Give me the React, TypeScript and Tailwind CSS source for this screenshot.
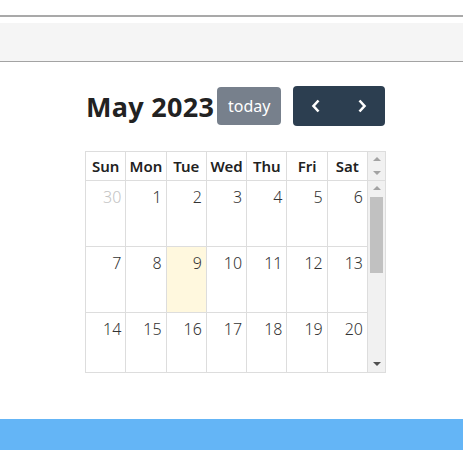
import React from "react";

const days = ["Sun", "Mon", "Tue", "Wed", "Thu", "Fri", "Sat"];
const weeks = [
  [30, 1, 2, 3, 4, 5, 6],
  [7, 8, 9, 10, 11, 12, 13],
  [14, 15, 16, 17, 18, 19, 20],
];

function Up({ c }: { c: string }) {
  return (
    <div
      className="w-0 h-0 border-l-[4px] border-r-[4px] border-b-[4px] border-l-transparent border-r-transparent"
      style={{ borderBottomColor: c }}
    />
  );
}
function Down({ c }: { c: string }) {
  return (
    <div
      className="w-0 h-0 border-l-[4px] border-r-[4px] border-t-[4px] border-l-transparent border-r-transparent"
      style={{ borderTopColor: c }}
    />
  );
}

export default function App() {
  return (
    <div className="w-[463px] h-[450px] bg-white overflow-hidden flex flex-col" style={{ fontFamily: '"Noto Sans", "Open Sans", sans-serif' }}>
      <div className="h-[15px]" />
      <div className="h-[2px] bg-[#a9a9a9]" />
      <div className="h-[6px]" />
      <div className="h-[39px] bg-[#f5f5f5] border-b border-[#a3a3a3]" />
      <div className="flex-1 flex flex-col">
        <div className="ml-[85px] w-[301px] mt-[24px]">
          <div className="flex items-center h-[40px]">
            <div className="text-[27px] font-bold text-[#222] leading-none ml-[1px] tracking-[0.3px]">May 2023</div>
            <div className="ml-[3px] h-[38px] w-[64px] rounded-[4px] bg-[#77808c] text-white text-[16px] flex items-center justify-center">today</div>
            <div className="ml-auto mr-[1px] h-[40px] w-[92px] rounded-[4px] bg-[#2c3e50] flex">
              <div className="flex-1 flex items-center justify-center">
                <svg width="12" height="16" viewBox="0 0 12 16"><path d="M8.5 2.5 L3.5 8 L8.5 13.5" stroke="white" strokeWidth="2.6" fill="none" /></svg>
              </div>
              <div className="flex-1 flex items-center justify-center">
                <svg width="12" height="16" viewBox="0 0 12 16"><path d="M3.5 2.5 L8.5 8 L3.5 13.5" stroke="white" strokeWidth="2.6" fill="none" /></svg>
              </div>
            </div>
          </div>
          <div className="mt-[25px] border border-[#dddddd]">
            <div className="flex h-[29px] border-b border-[#dddddd]">
              <div className="w-[282px] grid grid-cols-7">
                {days.map((d) => (
                  <div key={d} className="flex items-center justify-center text-[15px] font-semibold text-[#222] border-r border-[#dddddd]">{d}</div>
                ))}
              </div>
              <div className="w-[17px] bg-[#f1f1f1] flex flex-col items-center justify-between py-[5px]">
                <Up c="#a3a3a3" />
                <Down c="#a3a3a3" />
              </div>
            </div>
            <div className="flex h-[191px] overflow-hidden">
              <div className="w-[282px] flex flex-col">
                {weeks.map((w, wi) => (
                  <div key={wi} className="grid grid-cols-7 h-[66px] shrink-0 border-b border-[#dddddd]">
                    {w.map((n, i) => (
                      <div
                        key={i}
                        className={`border-r border-[#dddddd] text-right pr-[4px] pt-[4px] text-[16px] leading-[24px] font-light ${wi === 1 && i === 2 ? "bg-[#fff8de]" : ""} ${wi === 0 && i === 0 ? "text-[#c4c4c4]" : "text-[#333]"}`}
                      >
                        {n}
                      </div>
                    ))}
                  </div>
                ))}
              </div>
              <div className="w-[17px] bg-[#f1f1f1] flex flex-col items-center relative">
                <div className="mt-[5px]"><Up c="#a3a3a3" /></div>
                <div className="mt-[7px] w-[13px] h-[76px] bg-[#c1c1c1]" />
                <div className="absolute bottom-[6px]"><Down c="#505050" /></div>
              </div>
            </div>
          </div>
        </div>
      </div>
      <div className="h-[31px] bg-[#64b5f6]" />
    </div>
  );
}
